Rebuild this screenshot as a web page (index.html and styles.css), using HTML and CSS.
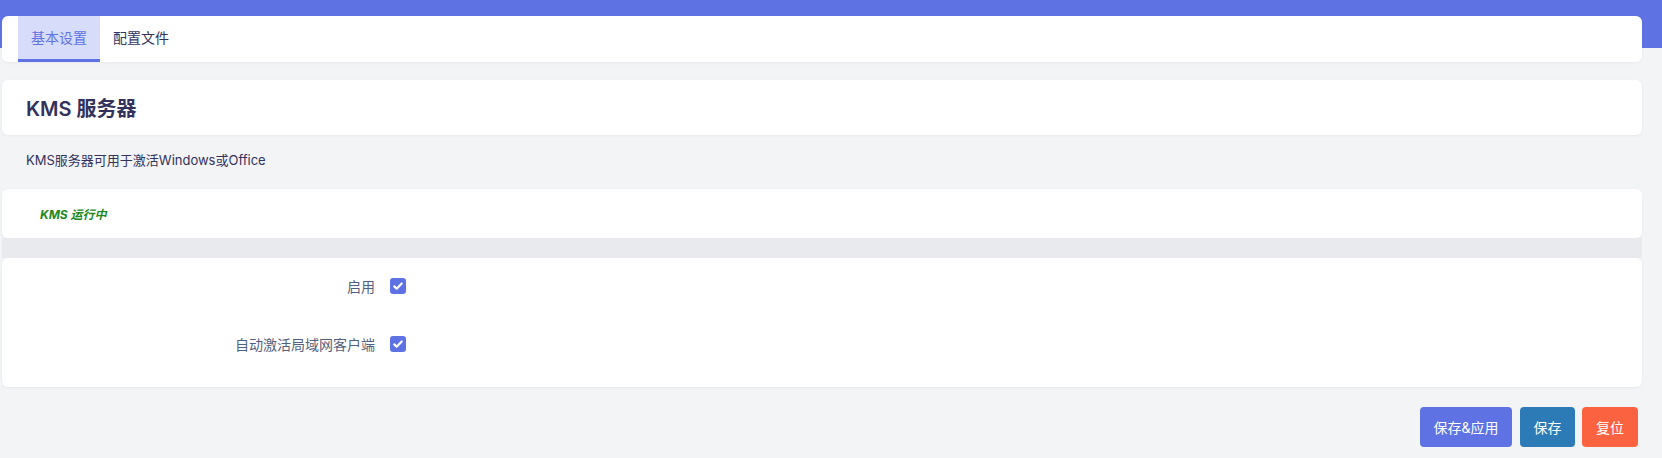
FILE: index.html
```
<!DOCTYPE html>
<html lang="zh-CN">
<head>
    <meta charset="UTF-8">
    <meta name="viewport" content="width=device-width, initial-scale=1.0">
    <title>KMS 服务器</title>
    <link rel="stylesheet" href="styles.css">
</head>
<body>
    <div class="main">
        <ul class="tabs">
            <li class="tab active">基本设置</li>
            <li class="tab">配置文件</li>
        </ul>
        <div class="card title-card">
            <h2>KMS 服务器</h2>
        </div>
        <p class="desc">KMS服务器可用于激活Windows或Office</p>
        <div class="card status-card">
            <em class="running">KMS 运行中</em>
        </div>
        <div class="gap"></div>
        <div class="card settings">
            <div class="row">
                <label class="row-label">启用</label>
                <span class="check"><svg viewBox="0 0 16 16" width="16" height="16"><path d="M4.3 8.4l2.4 2.3 5-5.2" fill="none" stroke="#fff" stroke-width="2.2" stroke-linecap="round" stroke-linejoin="round"/></svg></span>
            </div>
            <div class="row">
                <label class="row-label">自动激活局域网客户端</label>
                <span class="check"><svg viewBox="0 0 16 16" width="16" height="16"><path d="M4.3 8.4l2.4 2.3 5-5.2" fill="none" stroke="#fff" stroke-width="2.2" stroke-linecap="round" stroke-linejoin="round"/></svg></span>
            </div>
        </div>
        <div class="actions">
            <button class="btn btn-apply">保存&amp;应用</button>
            <button class="btn btn-save">保存</button>
            <button class="btn btn-reset">复位</button>
        </div>
    </div>
</body>
</html>
```

FILE: styles.css
```
body {
    margin: 0;
    font-family: Inter, "Noto Sans CJK SC", sans-serif;
    background-color: #f3f4f6;
    color: #32325d;
}
.main {
    padding: 16px 20px 0 2px;
    min-height: 442px;
    background: linear-gradient(#5e72e4 0, #5e72e4 48px, #f3f4f6 48px);
}
.card {
    background-color: #fff;
    border-radius: 6px;
    box-shadow: 0 1px 3px rgba(50, 50, 93, 0.06);
}
.tabs {
    list-style: none;
    margin: 0;
    padding: 0 0 0 16px;
    height: 46px;
    display: flex;
    background-color: #fff;
    border-radius: 6px;
    box-shadow: 0 1px 3px rgba(50, 50, 93, 0.06);
}
.tab {
    padding: 0 13px;
    line-height: 43px;
    font-size: 14px;
    color: #32325d;
    border-bottom: 3px solid transparent;
}
.tab.active {
    background-color: #d7dcfa;
    color: #5e72e4;
    border-bottom-color: #5e72e4;
}
.title-card {
    margin-top: 18px;
    height: 55px;
    display: flex;
    align-items: center;
    padding-left: 24px;
}
.title-card h2 {
    margin: 0;
    font-size: 20px;
    font-weight: 600;
    color: #32325d;
}
.desc {
    margin: 0;
    padding: 15px 24px 20px;
    font-size: 13px;
    color: #32325d;
}
.status-card {
    height: 49px;
    display: flex;
    align-items: center;
    padding-left: 38px;
}
.running {
    font-size: 12px;
    font-weight: 700;
    font-style: italic;
    color: #21891f;
}
.gap {
    height: 20px;
    background-color: #e9eaed;
}
.settings {
    height: 129px;
    padding-top: 14px;
    box-sizing: border-box;
}
.row {
    display: flex;
    align-items: center;
    height: 28px;
    margin-bottom: 30px;
}
.row-label {
    width: 388px;
    text-align: right;
    font-size: 14px;
    color: #525f7f;
    padding-right: 15px;
    box-sizing: border-box;
}
.check {
    width: 16px;
    height: 16px;
    border-radius: 3px;
    background-color: #5e72e4;
    display: flex;
}
.actions {
    display: flex;
    justify-content: flex-end;
    gap: 7px;
    padding: 20px 4px 0 0;
}
.btn {
    height: 40px;
    border: none;
    border-radius: 4px;
    color: #fff;
    font-family: Inter, "Noto Sans CJK SC", sans-serif;
    font-size: 14px;
    padding: 0;
    white-space: nowrap;
}
.btn-apply {
    background-color: #5e72e4;
    width: 92px;
    margin-right: 1px;
}
.btn-save {
    background-color: #2d7bb6;
    width: 55px;
}
.btn-reset {
    background-color: #fb6340;
    width: 56px;
}
```
